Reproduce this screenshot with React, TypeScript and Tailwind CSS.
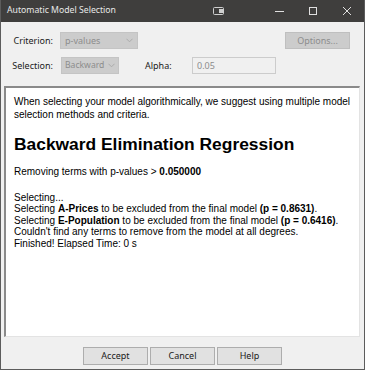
import React from "react";

const ui = { fontFamily: '"Noto Sans", "Open Sans", sans-serif' };
const arial = { fontFamily: '"Liberation Sans", Arial, sans-serif' };

function Chevron() {
  return (
    <svg width="7" height="5" viewBox="0 0 7 5" className="shrink-0">
      <path d="M0.5 0.8 L3.5 3.8 L6.5 0.8" fill="none" stroke="#a8a8a8" strokeWidth="0.9" />
    </svg>
  );
}

export default function App() {
  return (
    <div className="w-[365px] h-[370px] bg-[#f0f0f0] flex flex-col border-x border-b border-[#5c5c5c] overflow-hidden" style={ui}>
      {/* title bar */}
      <div className="h-[22px] shrink-0 bg-[#3f3e3d] flex items-center pl-[6px] text-[#e8e8e8] text-[8.7px]">
        <span>Automatic Model Selection</span>
        <div className="ml-auto flex items-center h-full">
          <svg width="12" height="8" viewBox="0 0 12 8" className="mr-[50px]">
            <rect x="0.5" y="0.5" width="10" height="7" rx="1" fill="none" stroke="#cfcfcf" strokeWidth="1" />
            <rect x="6" y="2" width="5" height="4" fill="#cfcfcf" />
          </svg>
          <svg width="10" height="10" viewBox="0 0 10 10" className="mr-[23px]">
            <path d="M0 5.5 H9" stroke="#e0e0e0" strokeWidth="1" />
          </svg>
          <svg width="10" height="10" viewBox="0 0 10 10" className="mr-[24px]">
            <rect x="1.5" y="1.5" width="7" height="7" fill="none" stroke="#e0e0e0" strokeWidth="1" />
          </svg>
          <svg width="10" height="10" viewBox="0 0 10 10" className="mr-[12px]">
            <path d="M1 1 L9 9 M9 1 L1 9" stroke="#e0e0e0" strokeWidth="1" />
          </svg>
        </div>
      </div>

      {/* controls */}
      <div className="flex items-center h-[17px] mt-[10px] text-[9px]">
        <div className="w-[52px] text-right text-[#1a1a1a]">Criterion:</div>
        <div className="ml-[7px] w-[78px] h-[17px] bg-[#cccccc] border border-[#c4c4c4] flex items-center pl-[4px] pr-[4px] text-[#8d8d8d]">
          <span>p-values</span>
          <span className="ml-auto"><Chevron /></span>
        </div>
        <div className="ml-auto mr-[14px] w-[65px] h-[17px] bg-[#cccccc] border border-[#bfbfbf] flex items-center justify-center text-[#8d8d8d]">
          Options...
        </div>
      </div>
      <div className="flex items-center h-[17px] mt-[8px] text-[9px]">
        <div className="w-[52px] text-right text-[#1a1a1a]">Selection:</div>
        <div className="ml-[8px] w-[58px] h-[17px] bg-[#cccccc] border border-[#c4c4c4] flex items-center pl-[3px] pr-[3px] text-[#8d8d8d]">
          <span className="text-[8.6px]">Backward</span>
          <span className="ml-auto"><Chevron /></span>
        </div>
        <div className="ml-[26px] w-[47px] text-[#1a1a1a]">Alpha:</div>
        <div className="w-[84px] h-[17px] bg-[#f0f0f0] border border-[#cccccc] flex items-center pl-[4px] text-[#8d8d8d]">
          0.05
        </div>
      </div>

      {/* panel */}
      <div className="mt-[12px] ml-[3px] mr-[4px] h-[251px] shrink-0 bg-white border-t-2 border-l-2 border-t-[#8a8a8a] border-l-[#8a8a8a] border-r border-b border-r-[#e3e3e3] border-b-[#e3e3e3] pl-[8px] pr-[8px] pt-[7px] text-black text-[10px] leading-[11.5px]" style={arial}>
        <p className="leading-[13px]">
          When selecting your model algorithmically, we suggest using multiple model selection methods and criteria.
        </p>
        <h1 className="mt-[13px] text-[17.4px] leading-[20px] font-bold">Backward Elimination Regression</h1>
        <p className="mt-[12px]">
          Removing terms with p-values &gt; <b>0.050000</b>
        </p>
        <p className="mt-[14px]">
          Selecting...
          <br />
          Selecting <b>A-Prices</b> to be excluded from the final model <b>(p = 0.8631)</b>.
          <br />
          Selecting <b>E-Population</b> to be excluded from the final model <b>(p = 0.6416)</b>.
          <br />
          Couldn't find any terms to remove from the model at all degrees.
          <br />
          Finished! Elapsed Time: 0 s
        </p>
      </div>

      {/* buttons */}
      <div className="flex justify-center gap-[2px] mt-[10px] text-[9px] text-[#1a1a1a]">
        <div className="w-[65px] h-[18px] bg-[#e1e1e1] border border-[#adadad] flex items-center justify-center">Accept</div>
        <div className="w-[65px] h-[18px] bg-[#e1e1e1] border border-[#adadad] flex items-center justify-center">Cancel</div>
        <div className="w-[65px] h-[18px] bg-[#e1e1e1] border border-[#adadad] flex items-center justify-center">Help</div>
      </div>
    </div>
  );
}
